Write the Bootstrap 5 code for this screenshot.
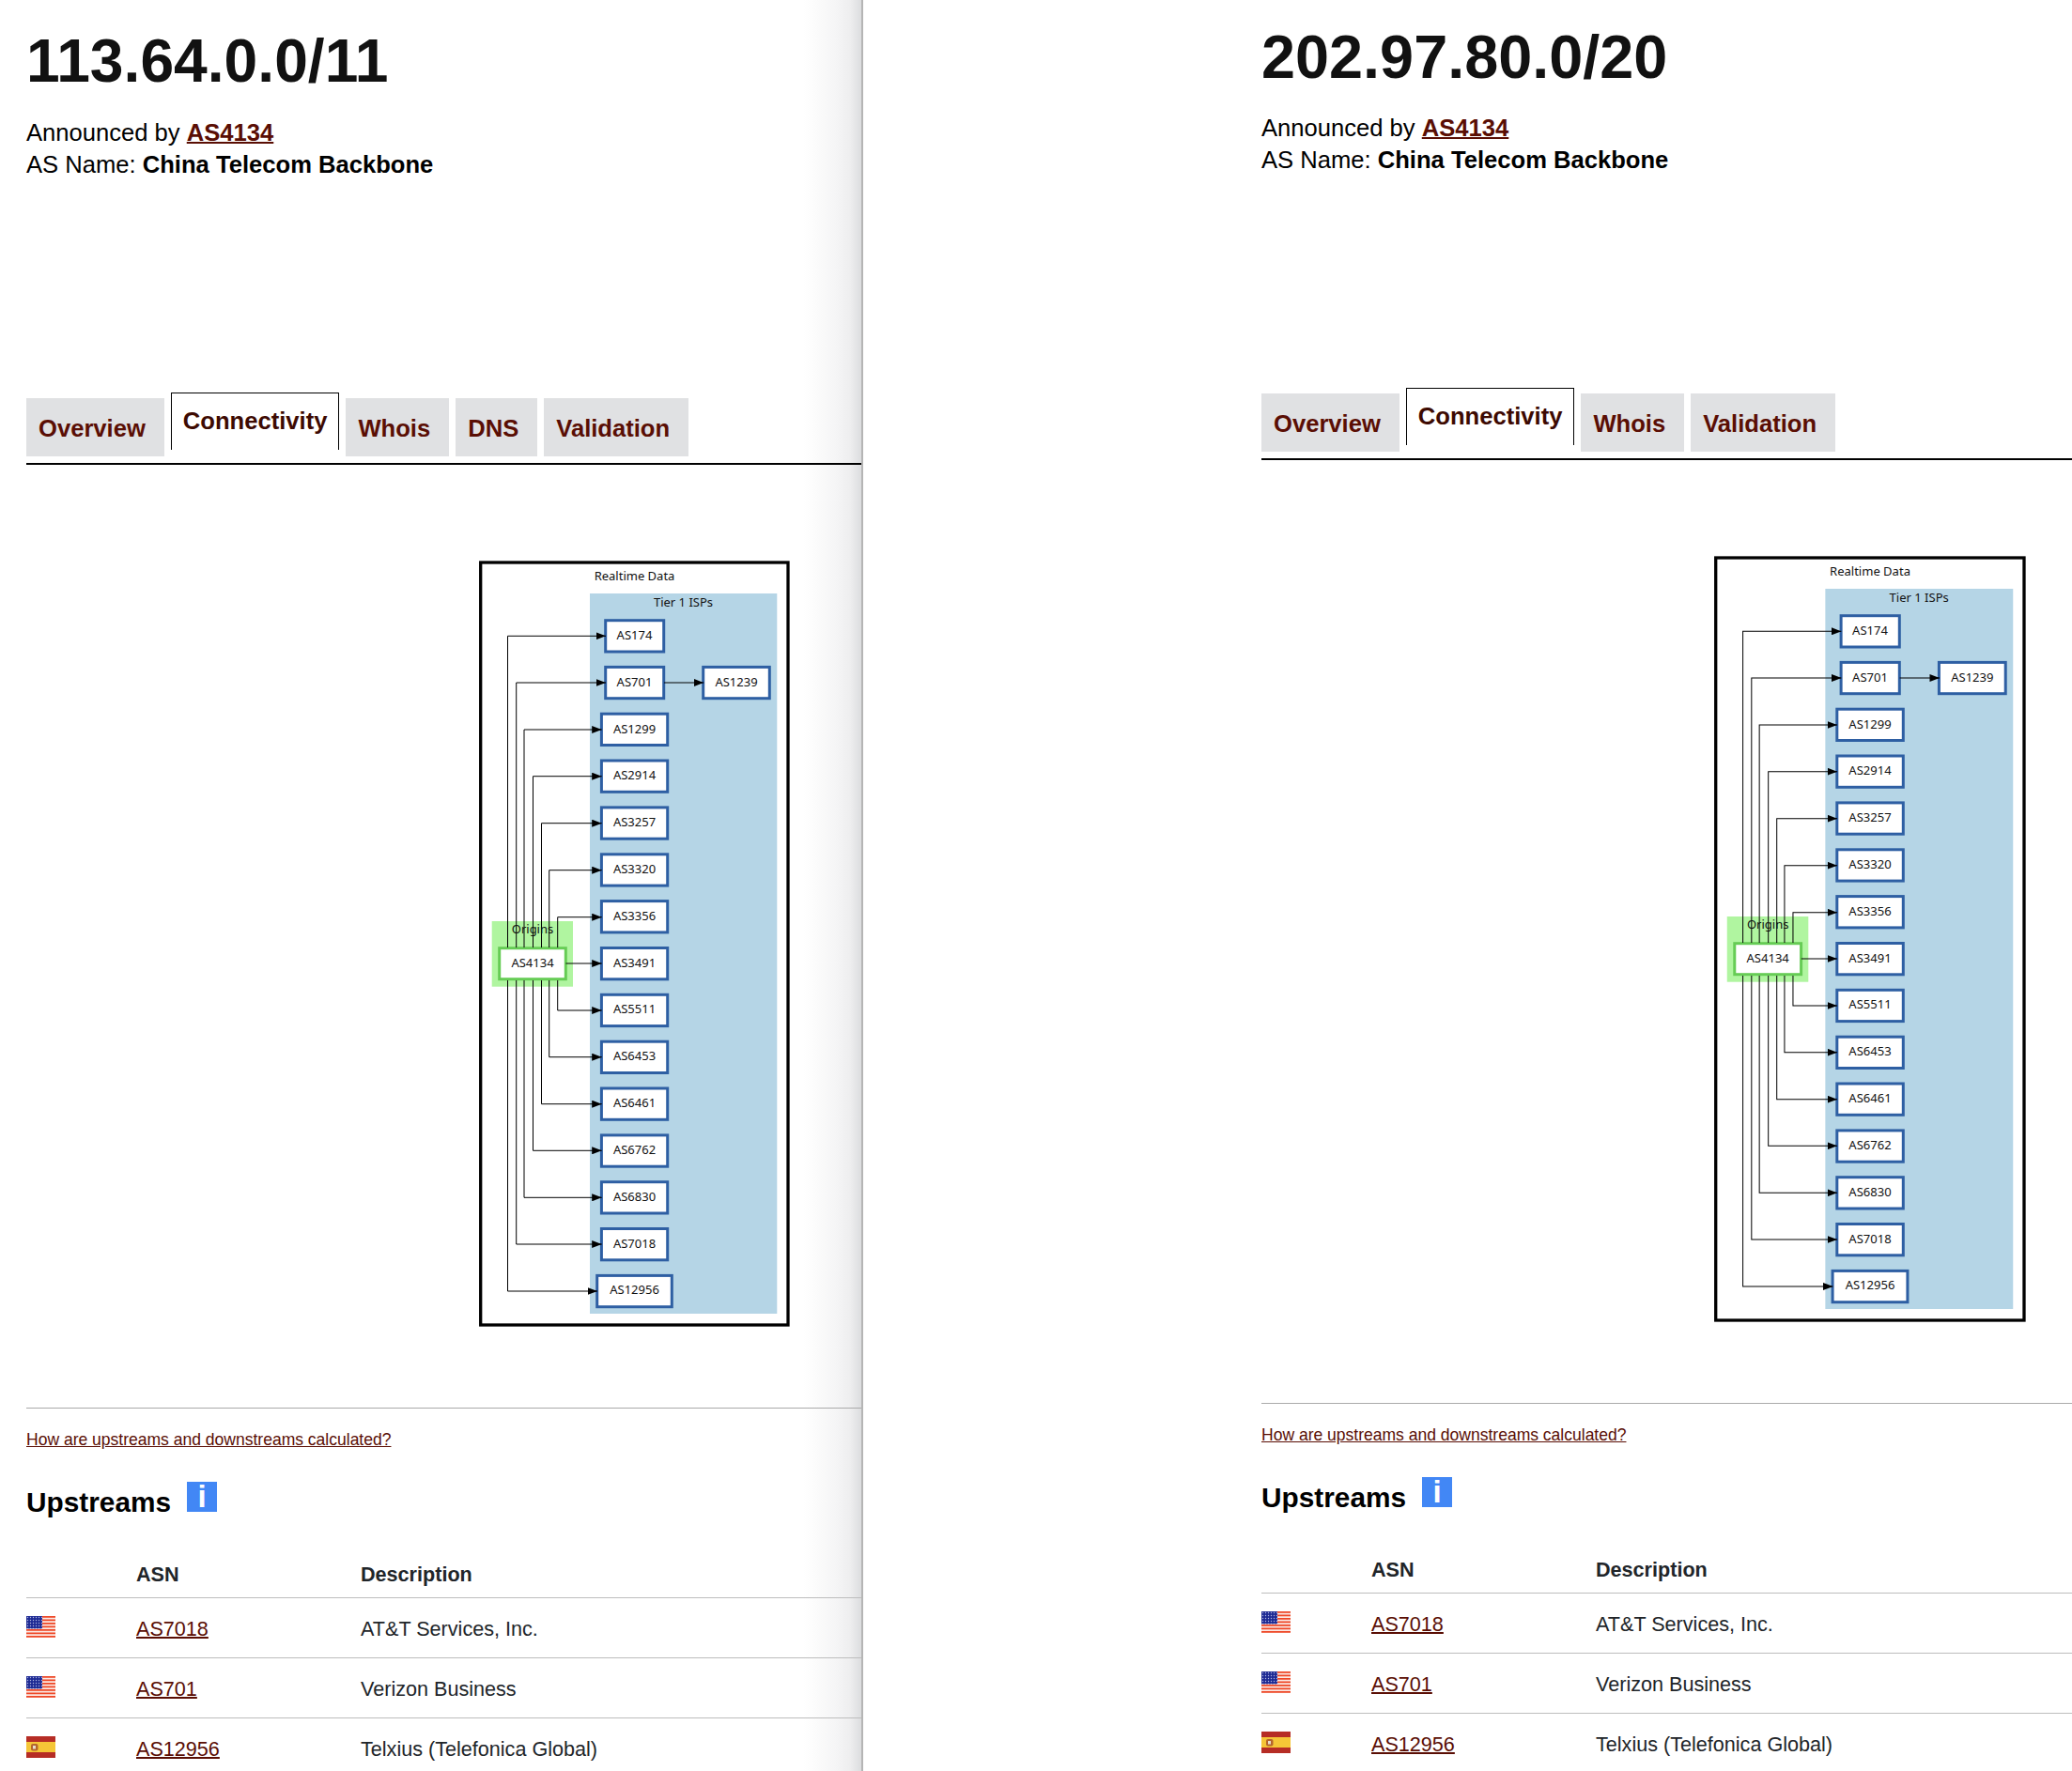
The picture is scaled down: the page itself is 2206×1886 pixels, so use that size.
<!DOCTYPE html>
<html lang="en">
<head>
<meta charset="utf-8">
<title>Prefix connectivity</title>
<link href="https://cdn.jsdelivr.net/npm/bootstrap@5.3.0/dist/css/bootstrap.min.css" rel="stylesheet">
<style>
html,body{height:1886px;overflow:hidden;}
body{font-family:"Liberation Sans",Arial,sans-serif;color:#000;background:#fff;}
a{color:#5a0e04;}
.pane-wrap{height:1886px;}
.pane-left{width:919px;flex:none;padding:27px 0 0 28px;border-right:2px solid #b5b5b5;overflow:hidden;
  background:linear-gradient(to right,#fff 855px,#fbfbfb 870px,#f5f5f6 890px,#eeeeef 905px,#dcdddf 917px);}
.pane-right{flex:1 1 auto;min-width:0;padding:22px 0 0 424px;overflow:hidden;}
.pfx-title{font-size:64.8px;font-weight:700;line-height:77px;margin:0 0 21px;color:#111;}
.pane-left .pfx-title{font-size:64.2px;}
.pfx-info{font-size:25.6px;line-height:33.5px;height:67px;margin:0 0 226px;}
.pfx-info a{font-weight:700;text-decoration-thickness:2px;}
.tab-bar{--bs-nav-tabs-border-width:0;gap:7px;border-bottom:2px solid #000;height:77px;align-items:flex-start;flex-wrap:nowrap;}
.tab-bar .nav-link{font-size:25.6px;font-weight:700;line-height:30px;color:#5a0e04;background:#e0e1e3;padding:17px 20px 15px 13px;height:62px;margin:6px 0 0;border:0;border-radius:0;}
.tab-bar .nav-link.active{color:#3d0a02;background:#fff;border:1px solid #000;border-bottom:0;margin-top:0;height:61px;padding:14px 12px;}
.diagram-svg{display:block;margin:102px 0 0 482px;width:331px;height:816px;}
.diagram-wide{width:332px;}
.diagram-svg text{font-family:"Noto Sans","Open Sans",sans-serif;font-size:13px;text-anchor:middle;fill:#111;}
.sep-line{margin:86px 0 0;border:0;border-top:1.5px solid #aaa;opacity:1;}
.calc-link{display:block;font-size:17.53px;line-height:26px;margin-top:20px;}
.up-head{margin-top:32px;height:44px;}
.up-head h2{font-size:29.8px;font-weight:700;line-height:36px;margin:0 0 1px;}
.info-tag{width:32px;height:32px;margin:0 0 12px 17px;background:#4287f5;color:#fff;font-size:33px;font-weight:700;line-height:32px;text-align:center;}
.up-table{--bs-table-border-color:#bdbdbd;margin:31px 0 0;font-size:21.6px;table-layout:fixed;width:100%;}
.up-table th,.up-table td{padding:0;vertical-align:middle;}
.up-table thead th{height:48px;padding-top:1px;border-bottom-width:1.5px;}
.up-table tbody td{height:64px;padding-top:5px;border-bottom-width:1.5px;}
.up-table a{text-decoration-thickness:2px;}
.col-flag{width:117px;}
.col-asn{width:239px;}
.flag-svg{display:block;width:31px;height:23px;margin-top:-7px;}
</style>
</head>
<body>
<svg width="0" height="0" class="d-block" aria-hidden="true">
<defs>
<marker id="arrowhead" viewBox="0 0 10.5 8" refX="10.5" refY="4" markerWidth="10.5" markerHeight="8" markerUnits="userSpaceOnUse" orient="auto"><path d="M0 0L10.5 4L0 8Z" fill="#000"/></marker>
<pattern id="starfield" width="3" height="3" patternUnits="userSpaceOnUse"><rect width="3" height="3" fill="#1d2a94"/><circle cx="1.5" cy="1.5" r=".7" fill="#aeb4df"/></pattern>
<symbol id="flag-us" viewBox="0 0 31 23">
<rect width="31" height="23" fill="#fbe9e4"/>
<path d="M0 .9H31M0 4.4H31M0 7.9H31M0 11.4H31M0 14.9H31M0 18.4H31M0 21.9H31" stroke="#ee4726" stroke-width="1.9"/>
<rect width="17" height="13.4" fill="url(#starfield)"/>
</symbol>
<symbol id="flag-es" viewBox="0 0 31 23">
<rect width="31" height="23" fill="#b62d25"/>
<rect y="6" width="31" height="11" fill="#f5c637"/>
<rect x="5" y="8" width="7.5" height="7.5" rx="2" fill="#b5652d"/>
<rect x="7" y="10" width="3" height="3.5" fill="#e7dccb"/>
</symbol>
<g id="diagram-shapes">
<rect x="511.7" y="599" width="327.3" height="812" fill="#fff" stroke="#000" stroke-width="3.3"/>
<rect x="628" y="632" width="199.3" height="767" fill="#b5d5e6"/>
<rect x="523.7" y="981" width="86.3" height="69.7" fill="#b0f5a0"/>
<g fill="#fff" stroke="#2e5fa3" stroke-width="3">
<rect x="644.7" y="660.7" width="62" height="33.3"/>
<rect x="644.7" y="710.4" width="62" height="33.3"/>
<rect x="748.7" y="710.4" width="70.6" height="33.3"/>
<rect x="640.4" y="760.2" width="70.3" height="33.3"/>
<rect x="640.4" y="810" width="70.3" height="33.3"/>
<rect x="640.4" y="859.9" width="70.3" height="33.3"/>
<rect x="640.4" y="909.8" width="70.3" height="33.3"/>
<rect x="640.4" y="959.6" width="70.3" height="33.3"/>
<rect x="640.4" y="1009.5" width="70.3" height="33.3"/>
<rect x="640.4" y="1059.3" width="70.3" height="33.3"/>
<rect x="640.4" y="1109.2" width="70.3" height="33.3"/>
<rect x="640.4" y="1159" width="70.3" height="33.3"/>
<rect x="640.4" y="1208.9" width="70.3" height="33.3"/>
<rect x="640.4" y="1258.7" width="70.3" height="33.3"/>
<rect x="640.4" y="1308.5" width="70.3" height="33.3"/>
<rect x="635.7" y="1358.4" width="79.6" height="33.3"/>
</g>
<rect x="531.7" y="1009.7" width="70.6" height="33" fill="#fff" stroke="#66cc55" stroke-width="3"/>
<g fill="none" stroke="#000" stroke-width="1">
<path marker-end="url(#arrowhead)" d="M540.5 1009V677.3H645"/>
<path marker-end="url(#arrowhead)" d="M549.7 1009V727H645"/>
<path marker-end="url(#arrowhead)" d="M558 1009V777H640.7"/>
<path marker-end="url(#arrowhead)" d="M567.5 1009V826.7H640.7"/>
<path marker-end="url(#arrowhead)" d="M576.5 1009V876.7H640.7"/>
<path marker-end="url(#arrowhead)" d="M584.7 1009V926.7H640.7"/>
<path marker-end="url(#arrowhead)" d="M593.7 1009V976.7H640.7"/>
<path marker-end="url(#arrowhead)" d="M602.5 1026H640.7"/>
<path marker-end="url(#arrowhead)" d="M593.7 1044V1076H640.7"/>
<path marker-end="url(#arrowhead)" d="M584.7 1044V1125.7H640.7"/>
<path marker-end="url(#arrowhead)" d="M576.5 1044V1175.7H640.7"/>
<path marker-end="url(#arrowhead)" d="M567.5 1044V1225.3H640.7"/>
<path marker-end="url(#arrowhead)" d="M558 1044V1275.3H640.7"/>
<path marker-end="url(#arrowhead)" d="M549.7 1044V1325H640.7"/>
<path marker-end="url(#arrowhead)" d="M540.5 1044V1375H636"/>
<path marker-end="url(#arrowhead)" d="M707 727H749.3"/>
</g>
</g>
</defs>
</svg>
<div class="d-flex pane-wrap">
<div class="pane-left">
<h1 class="pfx-title">113.64.0.0/11</h1>
<div class="pfx-info">Announced by <a href="#">AS4134</a><br>AS Name: <strong>China Telecom Backbone</strong></div>
<ul class="nav nav-tabs tab-bar">
<li class="nav-item"><a class="nav-link" href="#">Overview</a></li>
<li class="nav-item"><a class="nav-link active" href="#">Connectivity</a></li>
<li class="nav-item"><a class="nav-link" href="#">Whois</a></li>
<li class="nav-item"><a class="nav-link" href="#">DNS</a></li>
<li class="nav-item"><a class="nav-link" href="#">Validation</a></li>
</ul>
<svg class="diagram-svg" viewBox="510 597 331 816" role="img" aria-label="Connectivity graph">
<use href="#diagram-shapes"/>
<text x="675.5" y="618">Realtime Data</text><text x="727.5" y="646">Tier 1 ISPs</text><text x="567" y="994">Origins</text><text x="567" y="1030">AS4134</text>
<text x="675.5" y="681">AS174</text><text x="675.5" y="731">AS701</text><text x="784" y="731">AS1239</text><text x="675.5" y="781">AS1299</text><text x="675.5" y="830">AS2914</text><text x="675.5" y="880">AS3257</text><text x="675.5" y="930">AS3320</text><text x="675.5" y="980">AS3356</text><text x="675.5" y="1030">AS3491</text><text x="675.5" y="1079">AS5511</text><text x="675.5" y="1129">AS6453</text><text x="675.5" y="1179">AS6461</text><text x="675.5" y="1229">AS6762</text><text x="675.5" y="1279">AS6830</text><text x="675.5" y="1329">AS7018</text><text x="675.5" y="1378">AS12956</text>
</svg>
<hr class="sep-line">
<a class="calc-link" href="#">How are upstreams and downstreams calculated?</a>
<div class="d-flex align-items-center up-head"><h2>Upstreams</h2><span class="info-tag">i</span></div>
<table class="table up-table">
<colgroup><col class="col-flag"><col class="col-asn"><col></colgroup>
<thead><tr><th></th><th>ASN</th><th>Description</th></tr></thead>
<tbody>
<tr><td><svg class="flag-svg"><use href="#flag-us"/></svg></td><td><a href="#">AS7018</a></td><td>AT&amp;T Services, Inc.</td></tr>
<tr><td><svg class="flag-svg"><use href="#flag-us"/></svg></td><td><a href="#">AS701</a></td><td>Verizon Business</td></tr>
<tr><td><svg class="flag-svg"><use href="#flag-es"/></svg></td><td><a href="#">AS12956</a></td><td>Telxius (Telefonica Global)</td></tr>
</tbody>
</table>
</div>
<div class="pane-right">
<h1 class="pfx-title">202.97.80.0/20</h1>
<div class="pfx-info">Announced by <a href="#">AS4134</a><br>AS Name: <strong>China Telecom Backbone</strong></div>
<ul class="nav nav-tabs tab-bar">
<li class="nav-item"><a class="nav-link" href="#">Overview</a></li>
<li class="nav-item"><a class="nav-link active" href="#">Connectivity</a></li>
<li class="nav-item"><a class="nav-link" href="#">Whois</a></li>
<li class="nav-item"><a class="nav-link" href="#">Validation</a></li>
</ul>
<svg class="diagram-svg diagram-wide" viewBox="510 597 331 816" preserveAspectRatio="none" role="img" aria-label="Connectivity graph">
<use href="#diagram-shapes"/>
<text x="675.5" y="618">Realtime Data</text><text x="727.5" y="646">Tier 1 ISPs</text><text x="567" y="994">Origins</text><text x="567" y="1030">AS4134</text>
<text x="675.5" y="681">AS174</text><text x="675.5" y="731">AS701</text><text x="784" y="731">AS1239</text><text x="675.5" y="781">AS1299</text><text x="675.5" y="830">AS2914</text><text x="675.5" y="880">AS3257</text><text x="675.5" y="930">AS3320</text><text x="675.5" y="980">AS3356</text><text x="675.5" y="1030">AS3491</text><text x="675.5" y="1079">AS5511</text><text x="675.5" y="1129">AS6453</text><text x="675.5" y="1179">AS6461</text><text x="675.5" y="1229">AS6762</text><text x="675.5" y="1279">AS6830</text><text x="675.5" y="1329">AS7018</text><text x="675.5" y="1378">AS12956</text>
</svg>
<hr class="sep-line">
<a class="calc-link" href="#">How are upstreams and downstreams calculated?</a>
<div class="d-flex align-items-center up-head"><h2>Upstreams</h2><span class="info-tag">i</span></div>
<table class="table up-table">
<colgroup><col class="col-flag"><col class="col-asn"><col></colgroup>
<thead><tr><th></th><th>ASN</th><th>Description</th></tr></thead>
<tbody>
<tr><td><svg class="flag-svg"><use href="#flag-us"/></svg></td><td><a href="#">AS7018</a></td><td>AT&amp;T Services, Inc.</td></tr>
<tr><td><svg class="flag-svg"><use href="#flag-us"/></svg></td><td><a href="#">AS701</a></td><td>Verizon Business</td></tr>
<tr><td><svg class="flag-svg"><use href="#flag-es"/></svg></td><td><a href="#">AS12956</a></td><td>Telxius (Telefonica Global)</td></tr>
</tbody>
</table>
</div>
</div>
<script src="https://cdn.jsdelivr.net/npm/bootstrap@5.3.0/dist/js/bootstrap.bundle.min.js"></script>
</body>
</html>
